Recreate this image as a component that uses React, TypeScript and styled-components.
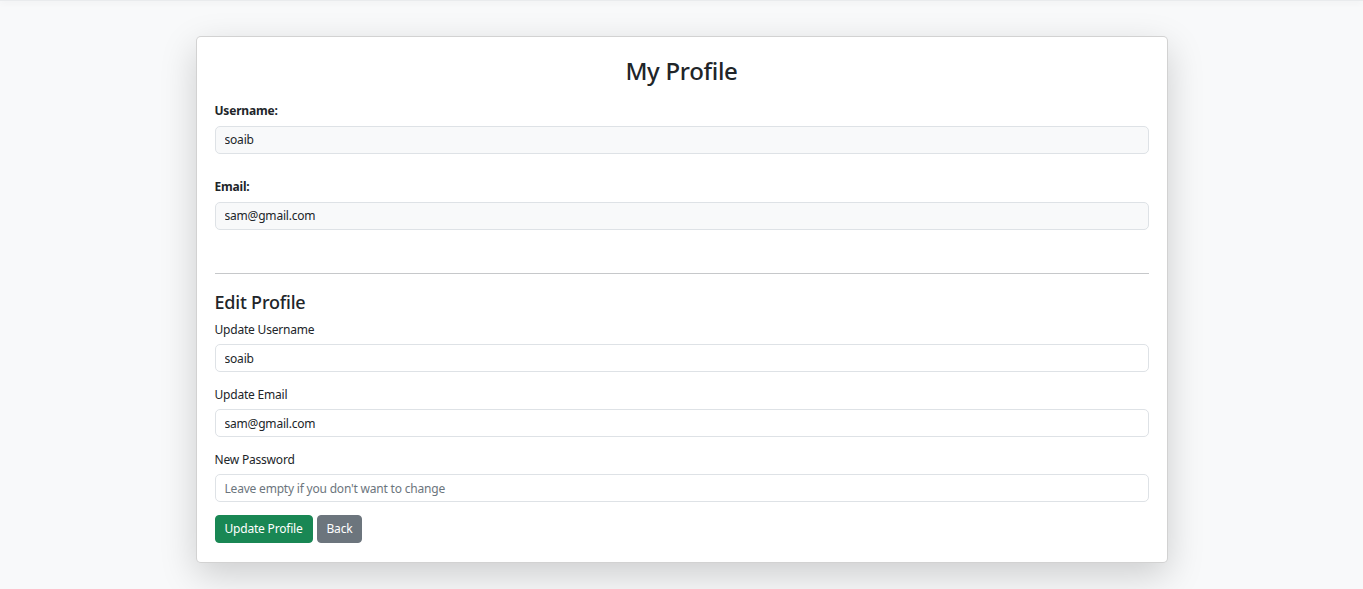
import React from "react";
import styled, { createGlobalStyle } from "styled-components";

const Global = createGlobalStyle`
  html, body { margin: 0; padding: 0; }
  body {
    background: #f8f9fa;
    font-family: "Noto Sans", "Open Sans", sans-serif;
    font-size: 12px;
    line-height: 1.5;
    color: #212529;
    min-height: 589px;
    letter-spacing: -0.2px;
  }
  * { box-sizing: border-box; }
`;

const TopShade = styled.div`
  height: 1px;
  background: #e9ebed;
  box-shadow: 0 1px 6px rgba(0, 0, 0, 0.14);
`;

const Container = styled.main`
  width: 990px;
  margin: 0 auto;
  padding: 35px 9px 30px;
`;

const Card = styled.section`
  background: #fff;
  border: 1px solid rgba(0, 0, 0, 0.175);
  border-radius: 5px;
  box-shadow: 0 12px 36px rgba(0, 0, 0, 0.175);
  padding: 18px 18px 19px;
  display: flex;
  flex-direction: column;
`;

const Title = styled.h2`
  margin: 2px 0 16px;
  text-align: center;
  font-size: 24px;
  font-weight: 500;
  line-height: 1.2;
  letter-spacing: -0.3px;
`;

const Field = styled.div<{ $gap?: number }>`
  display: flex;
  flex-direction: column;
  margin-bottom: ${(p) => p.$gap ?? 14}px;
`;

const Label = styled.label<{ $bold?: boolean }>`
  font-size: 12px;
  font-weight: ${(p) => (p.$bold ? 700 : 400)};
  margin-bottom: ${(p) => (p.$bold ? 6 : 5)}px;
  line-height: 18px;
`;

const Input = styled.input<{ $readonly?: boolean }>`
  height: 28px;
  padding: 4px 9px;
  font: inherit;
  font-size: 12px;
  letter-spacing: -0.2px;
  color: #212529;
  background: ${(p) => (p.$readonly ? "#f8f9fa" : "#fff")};
  border: 1px solid #dee2e6;
  border-radius: 5px;
  outline: none;
  &::placeholder { color: #6c757d; }
`;

const Divider = styled.hr`
  border: 0;
  border-top: 1px solid #c6c8ca;
  margin: 19px 0 18px;
`;

const SubTitle = styled.h4`
  margin: 0 0 8px;
  font-size: 18px;
  font-weight: 500;
  line-height: 1.2;
  letter-spacing: -0.2px;
`;

const Actions = styled.div`
  display: flex;
  gap: 4px;
`;

const Button = styled.button<{ $variant: "success" | "secondary" }>`
  height: 28px;
  padding: 4px 9px;
  font: inherit;
  font-size: 12px;
  letter-spacing: -0.2px;
  color: #fff;
  border: 1px solid ${(p) => (p.$variant === "success" ? "#198754" : "#6c757d")};
  background: ${(p) => (p.$variant === "success" ? "#198754" : "#6c757d")};
  border-radius: 4px;
  cursor: pointer;
`;

export default function App() {
  return (
    <>
      <Global />
      <TopShade />
      <Container>
        <Card>
          <Title>My Profile</Title>
          <Field $gap={24}>
            <Label $bold>Username:</Label>
            <Input $readonly readOnly value="soaib" />
          </Field>
          <Field $gap={24}>
            <Label $bold>Email:</Label>
            <Input $readonly readOnly value="sam@gmail.com" />
          </Field>
          <Divider />
          <SubTitle>Edit Profile</SubTitle>
          <Field>
            <Label>Update Username</Label>
            <Input defaultValue="soaib" />
          </Field>
          <Field>
            <Label>Update Email</Label>
            <Input defaultValue="sam@gmail.com" />
          </Field>
          <Field $gap={13}>
            <Label>New Password</Label>
            <Input type="password" placeholder="Leave empty if you don't want to change" />
          </Field>
          <Actions>
            <Button $variant="success">Update Profile</Button>
            <Button $variant="secondary">Back</Button>
          </Actions>
        </Card>
      </Container>
    </>
  );
}
